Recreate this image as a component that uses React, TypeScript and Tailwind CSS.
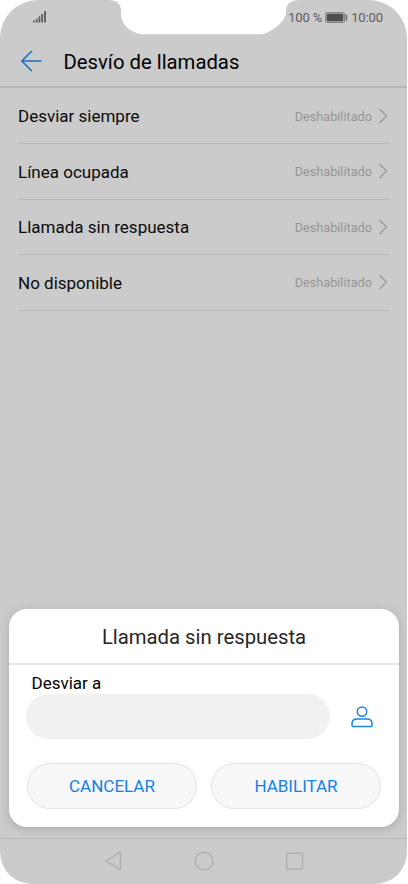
import { useState } from "react";

interface ForwardOption {
  label: string;
  status: string;
}

const options: ForwardOption[] = [
  { label: "Desviar siempre", status: "Deshabilitado" },
  { label: "Línea ocupada", status: "Deshabilitado" },
  { label: "Llamada sin respuesta", status: "Deshabilitado" },
  { label: "No disponible", status: "Deshabilitado" },
];

function SignalIcon() {
  return (
    <svg className="-mt-[1px]" width="13" height="12" viewBox="0 0 13 12" fill="#5f5f5f">
      <rect x="0" y="9.5" width="1.8" height="2" />
      <rect x="2.8" y="7.8" width="1.8" height="3.7" />
      <rect x="5.5" y="5.4" width="1.8" height="6.1" />
      <rect x="8.2" y="3" width="1.8" height="8.5" />
      <rect x="11" y="0" width="1.9" height="11.5" />
    </svg>
  );
}

function BatteryIcon() {
  return (
    <svg className="-mt-[1px]" width="23" height="11" viewBox="0 0 23 11">
      <rect x="0.5" y="0.5" width="19" height="10" rx="0.8" fill="none" stroke="#858585" />
      <rect x="1.6" y="1.6" width="16.8" height="7.8" fill="#4f4f4f" />
      <rect x="20.6" y="2.5" width="1.5" height="6" fill="#666" />
    </svg>
  );
}

function StatusBar() {
  return (
    <div className="relative flex h-[35px] shrink-0 items-center justify-between pl-[33px] pr-6 text-[13px] text-[#5c5c5c]">
      {/* Notch */}
      <svg className="absolute left-[109px] top-0" width="189" height="35" viewBox="0 0 189 35">
        <path
          d="M0 0C8 .5 12 4 12 11V15C12.500 25 22 32.500 32 34.300H153C162 32 174 24 177 14V10C177.500 4 182 .5 189 0Z"
          fill="#fff"
        />
      </svg>
      <SignalIcon />
      <div className="flex items-center tracking-[-0.1px]">
        <span className="w-[37px] whitespace-nowrap">100 %</span>
        <BatteryIcon />
        <span className="ml-[3px]">10:00</span>
      </div>
    </div>
  );
}

function Header() {
  return (
    <div className="flex h-[53px] shrink-0 items-center border-b-2 border-[#b6b6b6] pl-[21px]">
      <svg width="21" height="22" viewBox="0 0 21 22" fill="none" stroke="#176fca" strokeWidth="1.6">
        <path d="M20.500 11H1M10.800 1L.900 11l9.900 10" />
      </svg>
      <h1 className="ml-[21.5px] mt-[2px] text-[20.3px] leading-6 text-black">Desvío de llamadas</h1>
    </div>
  );
}

function OptionRow({ option }: { option: ForwardOption }) {
  return (
    <li className="flex h-[55.5px] items-center border-b border-[#b9b9b9]">
      <span className="flex-1 pt-[2px] text-[17px] text-[#0a0a0a]">{option.label}</span>
      <span className="pt-[1px] text-[12.7px] text-[#969696]">{option.status}</span>
      <svg className="ml-[7px] mr-[2px]" width="9" height="16" viewBox="0 0 9 16" fill="none" stroke="#9c9c9c" strokeWidth="1.4">
        <path d="M.500 1l7 7-7 7" />
      </svg>
    </li>
  );
}

function ForwardDialog() {
  const [number, setNumber] = useState("");

  return (
    <div className="absolute bottom-[57.5px] left-[9px] flex h-[218px] w-[390px] flex-col rounded-[18px] bg-white shadow-[0_2px_10px_rgba(0,0,0,0.16)]">
      <div className="flex h-[56.5px] items-center justify-center border-b-2 border-[#e6e6e6]">
        <h2 className="pt-[2px] text-[20.3px] text-[#262626]">Llamada sin respuesta</h2>
      </div>
      <label htmlFor="forward-to" className="ml-[22.5px] mt-[8px] text-[17px] leading-5 text-black">
        Desviar a
      </label>
      <div className="mt-[1px] flex items-center pl-[17px]">
        <input
          id="forward-to"
          value={number}
          onChange={(e) => setNumber(e.target.value)}
          className="h-[45px] w-[304px] rounded-full bg-[#f1f1f1] px-5 outline-none"
        />
        <svg className="ml-[20.5px]" width="22" height="22" viewBox="0 0 22 22" fill="none" stroke="#1c83e3" strokeWidth="1.5">
          <circle cx="11" cy="5.600" r="4.700" />
          <path d="M1 19.500V17.800C1 14.700 3.200 13 6 13H16C18.800 13 21 14.700 21 17.800V19.500Q21 20.500 20 20.500H2Q1 20.500 1 19.500Z" />
        </svg>
      </div>
      <div className="mt-[24px] flex gap-[14px] px-[18px] text-[17px] text-[#1580e6]">
        <button className="h-[46px] flex-1 rounded-full border border-[#e2e2e2] bg-[#f7f7f7] pt-[2px]">CANCELAR</button>
        <button className="h-[46px] flex-1 rounded-full border border-[#e2e2e2] bg-[#f7f7f7] pt-[2px]">HABILITAR</button>
      </div>
    </div>
  );
}

function NavBar() {
  return (
    <div className="flex h-[46px] shrink-0 items-center border-t border-[#b9b9b9] pb-[2px] pl-[105px]">
      <svg width="200" height="20" viewBox="0 0 200 20" fill="none" stroke="#b1b1b1" strokeWidth="1.5">
        <path d="M.800 10L15.500 1.200V18.800Z" strokeLinejoin="round" />
        <circle cx="99" cy="10" r="8.800" />
        <rect x="181.700" y="2.200" width="15.800" height="15.800" rx="0.5" />
      </svg>
    </div>
  );
}

export default function App() {
  return (
    <div className="h-[884px] w-[408px] overflow-hidden bg-white font-['Roboto',sans-serif]">
      <div className="relative flex h-[884px] w-[407px] flex-col overflow-hidden rounded-b-[32px] rounded-t-[38px] bg-[#cbcbcb]">
        <StatusBar />
        <Header />
        <ul className="flex-1 pl-[18px] pr-[17px] pt-[0.5px]">
          {options.map((option) => (
            <OptionRow key={option.label} option={option} />
          ))}
        </ul>
        <NavBar />
        <ForwardDialog />
      </div>
    </div>
  );
}
